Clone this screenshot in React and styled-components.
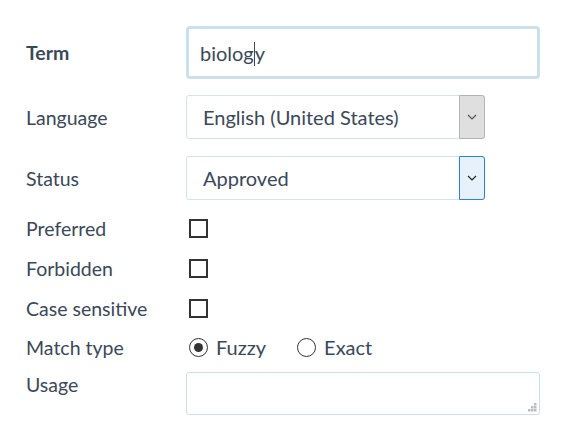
import React from 'react'
import styled, {createGlobalStyle} from 'styled-components'

const GlobalStyle = createGlobalStyle`
    html, body {
        margin: 0;
        padding: 0;
        background: #fff;
    }
    body {
        font-family: Lato, "Open Sans", sans-serif;
        color: #3b4859;
    }
`

const Form = styled.div`
    width: 570px;
    padding: 26px 0 0 26px;
    box-sizing: border-box;
    display: flex;
    flex-direction: column;
`
const Row = styled.div`
    display: grid;
    grid-template-columns: 160px 1fr;
    align-items: ${p => p.$top ? 'start' : 'center'};
    height: ${p => p.$h}px;
    margin-bottom: ${p => p.$mb || 0}px;
`
const Label = styled.div`
    font-size: 19.5px;
    font-weight: ${p => p.$bold ? 700 : 400};
    color: #3b4859;
    padding-top: ${p => p.$pt || 0}px;
`
const TermBox = styled.div`
    width: 354px;
    height: 53px;
    box-sizing: border-box;
    border: 3px solid #cbe0e8;
    border-radius: 4px;
    padding-left: 11px;
    display: flex;
    align-items: center;
    font-size: 20px;
    color: #3b4859;
`
const Caret = styled.span`
    display: inline-block;
    width: 1px;
    height: 24px;
    background: #3b4859;
    margin: 2px 0 0 0;
`
const Select = styled.div`
    width: 299px;
    height: 44px;
    box-sizing: border-box;
    border: 1px solid #d3e3ea;
    border-radius: 3px;
    display: flex;
    align-items: stretch;
    font-size: 20px;
`
const SelectText = styled.div`
    flex: 1;
    display: flex;
    align-items: center;
    padding-left: 16px;
`
const Arrow = styled.div`
    width: 26px;
    box-sizing: border-box;
    display: flex;
    align-items: center;
    justify-content: center;
    margin: -1px -1px -1px 0;
    border-radius: 0 3px 3px 0;
    background: ${p => p.$active ? '#e6f1fb' : '#dfdfdf'};
    border: 1px solid ${p => p.$active ? '#2b7fd6' : '#b4b4b4'};
`
const Check = styled.div`
    width: 19px;
    height: 19px;
    margin-left: 3px;
    box-sizing: border-box;
    border: 2px solid #333;
    background: #fff;
`
const Radios = styled.div`
    display: flex;
    align-items: center;
    margin-left: 3px;
`
const RadioItem = styled.div`
    display: flex;
    align-items: center;
    gap: 8px;
    margin-right: 31px;
    font-size: 20px;
`
const Radio = styled.div`
    width: 19px;
    height: 19px;
    box-sizing: border-box;
    border: 1.6px solid #333;
    border-radius: 50%;
    display: flex;
    align-items: center;
    justify-content: center;

    &::after {
        content: '';
        display: ${p => p.$on ? 'block' : 'none'};
        width: 9px;
        height: 9px;
        border-radius: 50%;
        background: #333;
    }
`
const TextArea = styled.div`
    position: relative;
    width: 354px;
    height: 43px;
    box-sizing: border-box;
    border: 1px solid #c9e0e8;
    border-radius: 3px;
`
const Grip = styled.svg`
    position: absolute;
    right: 2px;
    bottom: 2px;
`

const Chevron = ({dark}) => (
    <svg width="10" height="6" viewBox="0 0 10 6">
        <path d="M1 1 L5 5 L9 1" fill="none" stroke={dark ? '#222' : '#555'} strokeWidth="1.2"/>
    </svg>
)

const App = () => (
    <>
        <GlobalStyle/>
        <Form>
            <Row $h={53} $mb={16}>
                <Label $bold>Term</Label>
                <TermBox>biolog<Caret/>y</TermBox>
            </Row>
            <Row $h={44} $mb={17}>
                <Label>Language</Label>
                <Select>
                    <SelectText>English (United States)</SelectText>
                    <Arrow><Chevron/></Arrow>
                </Select>
            </Row>
            <Row $h={44} $mb={8}>
                <Label>Status</Label>
                <Select>
                    <SelectText>Approved</SelectText>
                    <Arrow $active><Chevron dark/></Arrow>
                </Select>
            </Row>
            <Row $h={40}>
                <Label>Preferred</Label>
                <Check/>
            </Row>
            <Row $h={40}>
                <Label>Forbidden</Label>
                <Check/>
            </Row>
            <Row $h={40}>
                <Label>Case sensitive</Label>
                <Check/>
            </Row>
            <Row $h={38} $mb={6}>
                <Label>Match type</Label>
                <Radios>
                    <RadioItem><Radio $on/>Fuzzy</RadioItem>
                    <RadioItem><Radio/>Exact</RadioItem>
                </Radios>
            </Row>
            <Row $h={43} $top>
                <Label $pt={1}>Usage</Label>
                <TextArea>
                    <Grip width="10" height="10" viewBox="0 0 10 10">
                        <rect x="7" y="1" width="2.5" height="2.5" fill="#bbb"/>
                        <rect x="4" y="4" width="2.5" height="2.5" fill="#bbb"/>
                        <rect x="7" y="4" width="2.5" height="2.5" fill="#bbb"/>
                        <rect x="1" y="7" width="2.5" height="2.5" fill="#bbb"/>
                        <rect x="4" y="7" width="2.5" height="2.5" fill="#bbb"/>
                        <rect x="7" y="7" width="2.5" height="2.5" fill="#bbb"/>
                    </Grip>
                </TextArea>
            </Row>
        </Form>
    </>
)

export default App
